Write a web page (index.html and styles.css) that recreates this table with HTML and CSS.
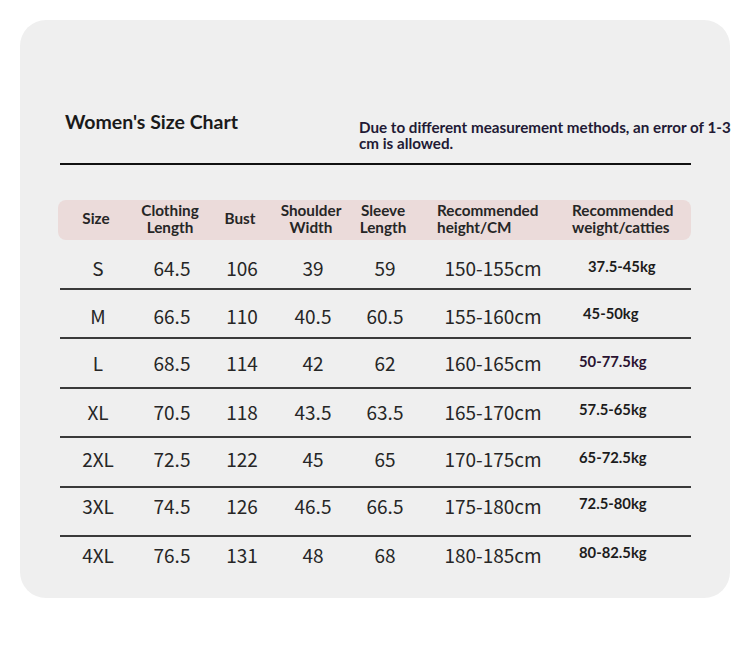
FILE: index.html
```html
<!DOCTYPE html>
<html lang="en">
<head>
<meta charset="utf-8">
<title>Women's Size Chart</title>
<link rel="stylesheet" href="styles.css">
</head>
<body>
<div class="panel">
  <div class="heading">
    <h1 class="title">Women's Size Chart</h1>
    <p class="note">Due to different measurement methods, an error of 1-3 cm is allowed.</p>
  </div>
  <div class="rule"></div>
  <div class="table">
    <div class="row head">
      <div class="cell">Size</div>
      <div class="cell">Clothing<br>Length</div>
      <div class="cell">Bust</div>
      <div class="cell">Shoulder<br>Width</div>
      <div class="cell">Sleeve<br>Length</div>
      <div class="cell left-h">Recommended<br>height/CM</div>
      <div class="cell left-w">Recommended<br>weight/catties</div>
    </div>
    <div class="row data r1">
      <div class="cell">S</div><div class="cell">64.5</div><div class="cell">106</div><div class="cell">39</div><div class="cell">59</div><div class="cell">150-155cm</div><div class="cell kg kg-s">37.5-45kg</div>
    </div>
    <div class="row data r2">
      <div class="cell">M</div><div class="cell">66.5</div><div class="cell">110</div><div class="cell">40.5</div><div class="cell">60.5</div><div class="cell">155-160cm</div><div class="cell kg kg-m">45-50kg</div>
    </div>
    <div class="row data r3">
      <div class="cell">L</div><div class="cell">68.5</div><div class="cell">114</div><div class="cell">42</div><div class="cell">62</div><div class="cell">160-165cm</div><div class="cell kg kg-dark">50-77.5kg</div>
    </div>
    <div class="row data r4">
      <div class="cell">XL</div><div class="cell">70.5</div><div class="cell">118</div><div class="cell">43.5</div><div class="cell">63.5</div><div class="cell">165-170cm</div><div class="cell kg">57.5-65kg</div>
    </div>
    <div class="row data r5">
      <div class="cell">2XL</div><div class="cell">72.5</div><div class="cell">122</div><div class="cell">45</div><div class="cell">65</div><div class="cell">170-175cm</div><div class="cell kg">65-72.5kg</div>
    </div>
    <div class="row data r6">
      <div class="cell">3XL</div><div class="cell">74.5</div><div class="cell">126</div><div class="cell">46.5</div><div class="cell">66.5</div><div class="cell">175-180cm</div><div class="cell kg">72.5-80kg</div>
    </div>
    <div class="row data last">
      <div class="cell">4XL</div><div class="cell">76.5</div><div class="cell">131</div><div class="cell">48</div><div class="cell">68</div><div class="cell">180-185cm</div><div class="cell kg">80-82.5kg</div>
    </div>
  </div>
</div>
</body>
</html>
```

FILE: styles.css
```css
html, body {
  margin: 0;
  padding: 0;
  background: #ffffff;
}

body {
  width: 750px;
  height: 656px;
  overflow: hidden;
  font-family: Lato, "Noto Sans", sans-serif;
}

.panel {
  margin: 20px 0 0 20px;
  width: 710px;
  height: 578px;
  box-sizing: border-box;
  padding-top: 90px;
  background: #efefef;
  border-radius: 26px;
}

.heading {
  display: flex;
  align-items: flex-start;
  padding-left: 45px;
  height: 41px;
}

.title {
  margin: 0;
  width: 294px;
  flex: none;
  font-family: Lato, sans-serif;
  font-weight: 700;
  font-size: 19.5px;
  line-height: 24px;
  color: #1a1a1a;
}

.note {
  margin: 9px 0 0 0;
  width: 380px;
  flex: none;
  font-family: Lato, sans-serif;
  font-weight: 700;
  font-size: 15.2px;
  line-height: 16px;
  color: #221a35;
}

.rule {
  margin: 12px 0 0 40px;
  width: 631px;
  height: 0;
  border-top: 2px solid #111111;
}

.table {
  margin: 35px 0 0 38px;
  width: 633px;
}

.row {
  display: grid;
  grid-template-columns: 76px 72px 68px 74px 70px 146px 127px;
  align-items: center;
}

.head {
  height: 40px;
  box-sizing: border-box;
  padding-bottom: 3px;
  background: #ebdbda;
  border-radius: 8px;
  font-family: Lato, sans-serif;
  font-weight: 700;
  font-size: 15.3px;
  line-height: 17px;
  color: #262626;
}

.cell {
  text-align: center;
  white-space: nowrap;
}

.head .left-h {
  text-align: left;
  padding-left: 19px;
}

.head .left-w {
  text-align: left;
  padding-left: 8px;
}

.data {
  height: 49.5px;
  box-sizing: border-box;
  border-bottom: 2px solid #3a3a3a;
  margin-left: 2px;
  font-family: "Noto Sans CJK SC", "Noto Sans", sans-serif;
  font-weight: 400;
  font-size: 19px;
  color: #262626;
}

.data.r1 { padding-top: 8px; }
.data.r2 { padding-top: 4px; }
.data.r4 { padding-bottom: 2px; }
.data.r5 { padding-bottom: 6px; }
.data.r6 { padding-bottom: 12px; }

.data.last {
  height: 34px;
  border-bottom: none;
}

.data .kg {
  text-align: left;
  padding-left: 13px;
  font-family: Lato, sans-serif;
  font-weight: 700;
  font-size: 14.8px;
  color: #1c1c1c;
  margin-top: -4px;
}

.data .kg-s {
  padding-left: 22px;
}

.data .kg-m {
  padding-left: 17px;
}

.data .kg-dark {
  color: #2a1230;
}
```
